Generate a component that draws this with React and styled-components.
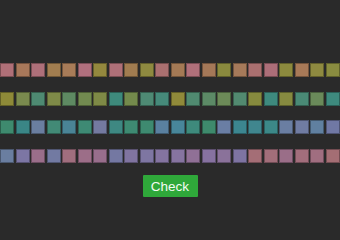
import React from "react";
import styled, { createGlobalStyle } from "styled-components";

const GlobalStyle = createGlobalStyle`
    html, body {
        margin: 0;
        padding: 0;
        background: #2a2a2a;
        font-family: "Liberation Sans", Arial, sans-serif;
    }
`;

const Board = styled.div`
    display: flex;
    flex-direction: column;
    align-items: center;
    padding-top: 63px;
    width: 340px;
`;

const Rows = styled.div`
    display: flex;
    flex-direction: column;
    gap: 14.7px;
    width: 100%;
`;

const Row = styled.div`
    display: flex;
    gap: 1.5px;
    width: 100%;
`;

const Tile = styled.div`
    flex: 1;
    aspect-ratio: 1;
    box-sizing: border-box;
    border: 1px solid rgba(0, 0, 0, 0.3);
    background: ${(p) => p.$color};
`;

const CheckButton = styled.button`
    margin-top: 12px;
    width: 55px;
    height: 22px;
    padding: 0;
    border: none;
    border-radius: 1px;
    background: #2fa83a;
    color: #f4fbf4;
    font-family: "Liberation Sans", Arial, sans-serif;
    font-size: 13.5px;
    cursor: pointer;
`;

const rows = [
    [
        "#b07078", "#a8785a", "#ae707a", "#a27e50", "#a87c58", "#b0707e",
        "#94883e", "#ae7078", "#a07c50", "#8e8a40", "#aa7070", "#a47a55",
        "#b0707a", "#a47858", "#8a8a3e", "#a67a5a", "#aa7070", "#ac6e78",
        "#8c8a3e", "#a87a58", "#8e8a40", "#8a8c40",
    ],
    [
        "#8e8a38", "#7a8a4e", "#4e8a72", "#7e8a48", "#5e8a62", "#728a50",
        "#7e8a46", "#3e8a7c", "#748a4c", "#4e8a74", "#468a7a", "#908a3a",
        "#508a70", "#5c8a66", "#6c8a58", "#528a70", "#868a3e", "#3e8a7e",
        "#868a40", "#4a8a76", "#6a8a5a", "#3e8a7e",
    ],
    [
        "#3e8a6e", "#3a8686", "#6a7ea0", "#428a76", "#4a8496", "#3e8a74",
        "#747aa0", "#3e8882", "#3e8a72", "#3e8a70", "#5a80a0", "#48869a",
        "#3e8a7c", "#3e8a6c", "#6a7ea4", "#3c8690", "#40868e", "#3c8888",
        "#6a7ea2", "#707ca2", "#6080a0", "#7078a4",
    ],
    [
        "#6a7ea0", "#7c76a4", "#9a6e8a", "#727aa2", "#a06e7e", "#9c6e88",
        "#986e8c", "#7478a2", "#8074a0", "#7e76a2", "#8474a0", "#8674a0",
        "#907096", "#8672a0", "#8a729a", "#7e74a2", "#a46e76", "#a26e7a",
        "#9a6e88", "#a26e7c", "#a06e80", "#a46e74",
    ],
];

export default function App() {
    return (
        <>
            <GlobalStyle />
            <Board>
                <Rows>
                    {rows.map((row, i) => (
                        <Row key={i}>
                            {row.map((color, j) => (
                                <Tile key={j} $color={color} />
                            ))}
                        </Row>
                    ))}
                </Rows>
                <CheckButton>Check</CheckButton>
            </Board>
        </>
    );
}
